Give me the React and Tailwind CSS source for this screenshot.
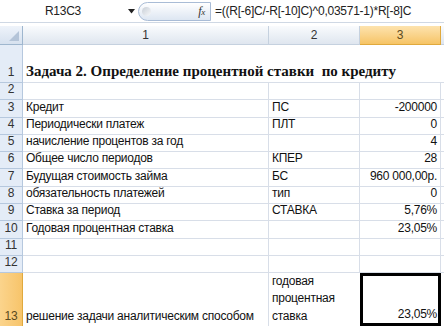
import React from "react";

const F = { fontFamily: '"Liberation Sans", Arial, sans-serif', letterSpacing: "-0.25px" };

const rows = [
  { n: "1", h: "h-[38px]", a: "", title: true },
  { n: "2", h: "h-[17.3px]" },
  { n: "3", a: "Кредит", b: "ПС", c: "-200000" },
  { n: "4", a: "Периодически платеж", b: "ПЛТ", c: "0" },
  { n: "5", a: "начисление процентов за год", b: "", c: "4" },
  { n: "6", a: "Общее число периодов", b: "КПЕР", c: "28" },
  { n: "7", a: "Будущая стоимость займа", b: "БС", c: "960 000,00р." },
  { n: "8", a: "обязательность платежей", b: "тип", c: "0" },
  { n: "9", a: "Ставка за период", b: "СТАВКА", c: "5,76%" },
  { n: "10", a: "Годовая процентная ставка", b: "", c: "23,05%" },
  { n: "11" },
  { n: "12" },
];

export default function App() {
  return (
    <div className="w-[444px] h-[328px] overflow-hidden bg-white text-[#111]" style={F}>
      {/* formula bar */}
      <div className="h-[23px] flex items-center border-b border-[#cfd8e4] text-[12px]">
        <div className="w-[124px] flex justify-center pl-[2px] text-[#222]">R13C3</div>
        <div className="w-[14px] flex justify-center">
          <svg width="7" height="5" viewBox="0 0 7 5"><path d="M0 0H7L3.5 4.5Z" fill="#222" /></svg>
        </div>
        <div className="h-[19px] w-[73px] rounded-l-full border border-[#a9bcd6] bg-gradient-to-b from-white to-[#dde6f2] flex items-center justify-between pr-[5px] pl-[3px]">
          <div className="w-[9px] h-[9px] rounded-full bg-gradient-to-br from-[#c8ced6] to-[#f7f9fb]" />
          <span className="italic text-[12px] text-[#333]" style={{ fontFamily: '"Liberation Serif", serif' }}>f<span className="text-[9px]">x</span></span>
        </div>
        <div className="pl-[4px] text-[12px] whitespace-nowrap text-[#222]">=((R[-6]C/-R[-10]C)^0,03571-1)*R[-8]C</div>
      </div>
      <div className="h-[3px]" />
      {/* column header */}
      <div className="h-[19px] flex text-[12px] text-[#333]">
        <div className="w-[23px] shrink-0 bg-gradient-to-b from-[#eef3fa] to-[#d6e1ef] border-r border-b border-[#9eb6ce] relative">
          <svg className="absolute right-[3px] bottom-[3px]" width="10" height="10" viewBox="0 0 10 10"><path d="M10 0V10H0Z" fill="#b4c4d8" /></svg>
        </div>
        <div className="w-[246px] shrink-0 flex items-center justify-center bg-gradient-to-b from-[#f9fbfd] to-[#dfe6ef] border-r border-b border-[#c5d1df]">1</div>
        <div className="w-[91px] shrink-0 flex items-center justify-center bg-gradient-to-b from-[#f9fbfd] to-[#dfe6ef] border-r border-b border-[#c5d1df]">2</div>
        <div className="w-[81px] shrink-0 flex items-center justify-center bg-gradient-to-b from-[#fde3ae] to-[#f6c465] border-r border-b border-[#e0a93d] text-[#5a4a20]">3</div>
        <div className="flex-1 bg-gradient-to-b from-[#f9fbfd] to-[#dfe6ef] border-b border-[#c5d1df]" />
      </div>
      {rows.map((r) => (
        <div key={r.n} className={`flex ${r.h || "h-[17.3px]"} text-[12px]`}>
          <div className="w-[23px] shrink-0 bg-[#e4ecf7] border-r border-b border-[#b6c8de] flex items-end justify-center pb-[1px] text-[#333]">{r.n}</div>
          {r.title ? (
            <div className="w-[418px] shrink-0 border-b border-[#d8dee8] flex items-end pl-[3px] pb-0 whitespace-nowrap font-bold text-[15px] text-[#111]" style={{ fontFamily: '"Liberation Serif", serif', letterSpacing: "0px" }}>
              Задача 2. Определение процентной ставки&nbsp; по кредиту
            </div>
          ) : (
            <>
              <div className="w-[246px] shrink-0 border-r border-b border-[#d8dee8] flex items-end pl-[3px] pb-[1px] whitespace-nowrap">{r.a}</div>
              <div className="w-[91px] shrink-0 border-r border-b border-[#d8dee8] flex items-end pl-[3px] pb-[1px] whitespace-nowrap">{r.b}</div>
              <div className="w-[81px] shrink-0 border-r border-b border-[#d8dee8] flex items-end justify-end pr-[3px] pb-[1px] whitespace-nowrap">{r.c}</div>
            </>
          )}
          <div className="flex-1 border-b border-[#d8dee8]" />
        </div>
      ))}
      {/* row 13 */}
      <div className="flex h-[53px] text-[12px]">
        <div className="w-[23px] shrink-0 bg-gradient-to-r from-[#fbd48c] to-[#f7c46a] border-r border-[#e0a93d] flex items-end justify-center pb-[1px] text-[#5a4a20]">13</div>
        <div className="w-[246px] shrink-0 border-r border-[#d8dee8] flex items-end pl-[3px] pb-[1px] whitespace-nowrap">решение задачи аналитическим способом</div>
        <div className="w-[91px] shrink-0 flex flex-col justify-end pl-[3px] pb-[1px] leading-[17.5px]">
          <div>годовая</div>
          <div>процентная</div>
          <div>ставка</div>
        </div>
        <div className="w-[81px] shrink-0 border-[3px] border-black flex items-end justify-end pr-[1px] pb-[0px]">23,05%</div>
        <div className="flex-1" />
      </div>
    </div>
  );
}
